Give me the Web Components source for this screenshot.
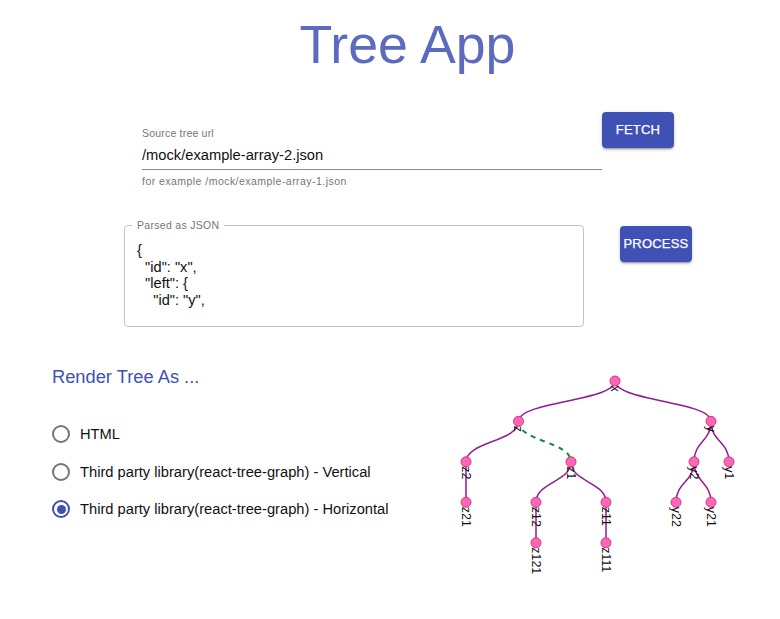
<!DOCTYPE html>
<html><head><meta charset="utf-8"><title>Tree App</title>
<style>
html,body{margin:0;padding:0;background:#fff;overflow:hidden}
body{font-family:"Liberation Sans",Arial,sans-serif;color:#000;width:780px;height:619px}
</style></head>
<body>
<tree-app></tree-app>
<script>
function el(name,css,html){
  customElements.define(name,class extends HTMLElement{
    connectedCallback(){
      if(this.shadowRoot)return;
      const s=this.attachShadow({mode:'open'});
      s.innerHTML='<style>'+css+'</style>'+(typeof html==='function'?html(this):html);
    }
  });
}
el('app-button',`:host{display:block;flex:none}
button{display:block;width:72px;height:36px;padding:0;border:0;border-radius:4px;background:#3f51b5;color:#fff;font:500 13px/36px "Liberation Sans",Arial,sans-serif;-webkit-text-stroke:.25px #fff;letter-spacing:.2px;text-transform:uppercase;box-shadow:0 3px 1px -2px rgba(0,0,0,.2),0 2px 2px 0 rgba(0,0,0,.14),0 1px 5px 0 rgba(0,0,0,.12)}`,
`<button><slot></slot></button>`);
el('text-input',`:host{display:block;width:460px;flex:none;margin-top:15px}
.label{font-size:10.5px;line-height:12px;color:#757575;letter-spacing:.2px;height:12px}
.value{font-size:14.7px;line-height:20px;margin-top:6px;height:24px;border-bottom:1px solid #8c8c8c;color:#111}
.help{font-size:10.5px;line-height:12px;margin-top:5px;color:#757575;letter-spacing:.46px}`,
h=>`<div class="label">${h.getAttribute('label')}</div><div class="value">${h.getAttribute('value')}</div><div class="help">${h.getAttribute('help')}</div>`);
el('json-box',`:host{display:block;width:460px;flex:none}
fieldset{margin:0;padding:0 11px 0 12px;height:108px;box-sizing:border-box;border:1px solid #c4c4c4;border-radius:4px}
legend{margin-left:-5px;padding:0 5px;font-size:10.5px;line-height:12px;color:#757575;letter-spacing:.3px}
pre{margin:0;padding-top:11px;font:14.6px/16.5px "Liberation Sans",Arial,sans-serif;color:#111;white-space:pre}`,
h=>`<fieldset><legend>${h.getAttribute('label')}</legend><pre>{
  "id": "x",
  "left": {
    "id": "y",</pre></fieldset>`);
el('radio-option',`:host{display:flex;align-items:center;gap:10px;height:37.5px;font-size:14.7px;color:#111}
.r{width:18px;height:18px;box-sizing:border-box;border:2px solid #757575;border-radius:50%;display:flex;align-items:center;justify-content:center;flex:none}
:host([checked]) .r{border-color:#3f51b5}
:host([checked]) .r i{display:block;width:9px;height:9px;border-radius:50%;background:#3f51b5}`,
`<span class="r"><i></i></span><span><slot></slot></span>`);
el('tree-graph',`:host{display:block;width:320px;height:230px;flex:none}
svg{display:block}
.l{fill:none;stroke:#941a94;stroke-width:1.5}
.d{fill:none;stroke:#0a8a3c;stroke-width:2;stroke-dasharray:5 5}
circle{fill:#ff66b8;stroke:#d13a78;stroke-width:1}
text{font:12.4px "Liberation Sans",Arial,sans-serif;fill:#111}`,
()=>{
 const n={x:[615,381],z:[518.5,421.3],y:[711,421.3],z2:[466,461.8],z1:[571,461.8],y2:[694,461.8],y1:[729,461.8],z21:[466,502.3],z12:[536,502.3],z11:[606,502.3],y22:[676,502.3],y21:[711,502.3],z121:[536,542.8],z111:[606,542.8]};
 const e=[['x','z'],['x','y'],['z','z2'],['z2','z21'],['z1','z12'],['z1','z11'],['z12','z121'],['z11','z111'],['y','y2'],['y','y1'],['y2','y22'],['y2','y21']];
 const link=(a,b,c)=>{const [x0,y0]=n[a],[x1,y1]=n[b],m=(y0+y1)/2;return `<path class="${c}" d="M${x0} ${y0}C${x0} ${m} ${x1} ${m} ${x1} ${y1}"/>`;};
 let o='<svg width="320" height="230" viewBox="440 360 320 230">';
 for(const [a,b] of e)o+=link(a,b,'l');
 o+=link('z','z1','d');
 for(const k in n){const [x,y]=n[k];o+=`<circle cx="${x}" cy="${y}" r="5"/>`;}
 for(const k in n){const [x,y]=n[k];o+=`<text transform="translate(${x-4.5} ${y+4.5}) rotate(90)">${k}</text>`;}
 return o+'</svg>';
});
el('tree-app',`:host{display:block;width:780px;height:619px;overflow:hidden}
h1{margin:0;height:88px;font-size:53.7px;font-weight:400;line-height:88px;color:#5c6bc0;text-align:center;padding-left:35px}
.r1{display:flex;align-items:flex-start;padding:24px 0 0 142px}
.r2{display:flex;align-items:flex-start;gap:36px;padding:0 0 0 124px;margin-top:32px}
.r2 app-button{margin-top:7px}
.r3{display:flex;align-items:flex-start;margin-top:33px}
.left{width:388px;padding-left:52px;flex:none}
h2{margin:0;font-size:18.3px;font-weight:400;line-height:24px;color:#3f51b5;padding-top:5px;height:42px}
.opts{padding-top:8.5px}`,
`<h1>Tree App</h1>
<div class="r1"><text-input label="Source tree url" value="/mock/example-array-2.json" help="for example /mock/example-array-1.json"></text-input><app-button>Fetch</app-button></div>
<div class="r2"><json-box label="Parsed as JSON"></json-box><app-button>Process</app-button></div>
<div class="r3"><div class="left"><h2>Render Tree As ...</h2><div class="opts">
<radio-option>HTML</radio-option><radio-option>Third party library(react-tree-graph) - Vertical</radio-option><radio-option checked>Third party library(react-tree-graph) - Horizontal</radio-option></div></div>
<tree-graph></tree-graph></div>`);
</script>
</body></html>
